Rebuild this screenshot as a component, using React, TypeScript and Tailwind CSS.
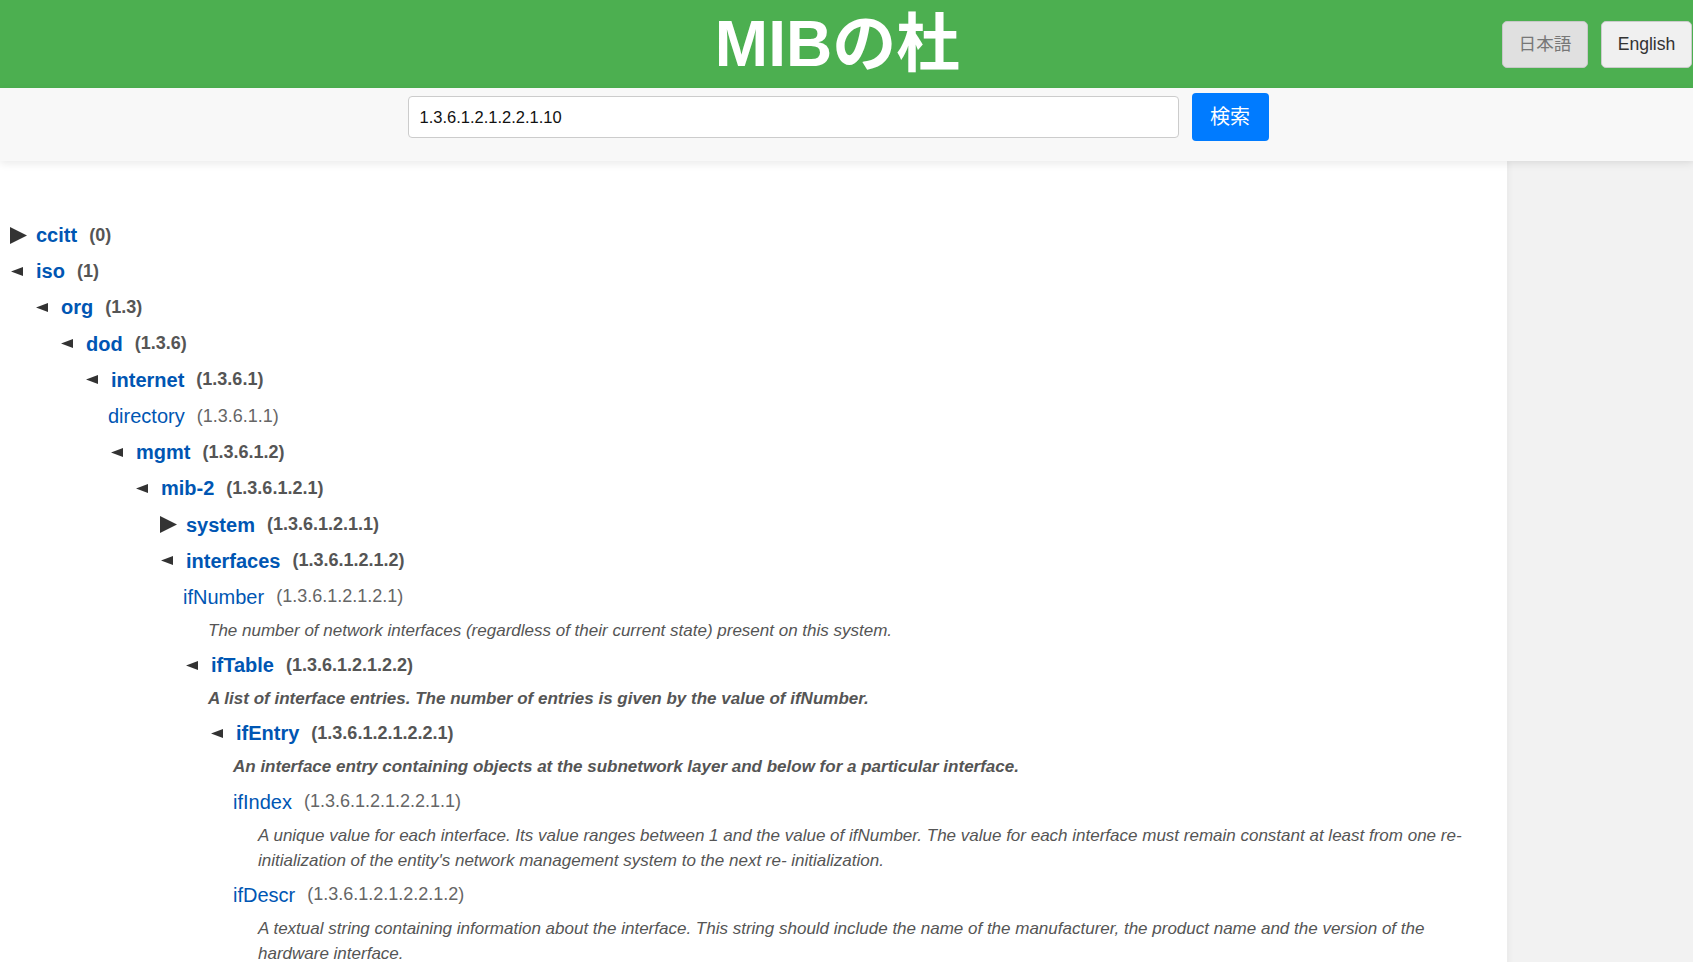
import { useState } from "react";

type MibNode = {
  name: string;
  oid: string;
  state?: "open" | "closed";
  desc?: string;
  descBold?: boolean;
  children?: MibNode[];
};

const tree: MibNode[] = [
  { name: "ccitt", oid: "0", state: "closed" },
  {
    name: "iso", oid: "1", state: "open",
    children: [{
      name: "org", oid: "1.3", state: "open",
      children: [{
        name: "dod", oid: "1.3.6", state: "open",
        children: [{
          name: "internet", oid: "1.3.6.1", state: "open",
          children: [
            { name: "directory", oid: "1.3.6.1.1" },
            {
              name: "mgmt", oid: "1.3.6.1.2", state: "open",
              children: [{
                name: "mib-2", oid: "1.3.6.1.2.1", state: "open",
                children: [
                  { name: "system", oid: "1.3.6.1.2.1.1", state: "closed" },
                  {
                    name: "interfaces", oid: "1.3.6.1.2.1.2", state: "open",
                    children: [
                      {
                        name: "ifNumber", oid: "1.3.6.1.2.1.2.1",
                        desc: "The number of network interfaces (regardless of their current state) present on this system.",
                      },
                      {
                        name: "ifTable", oid: "1.3.6.1.2.1.2.2", state: "open", descBold: true,
                        desc: "A list of interface entries. The number of entries is given by the value of ifNumber.",
                        children: [{
                          name: "ifEntry", oid: "1.3.6.1.2.1.2.2.1", state: "open", descBold: true,
                          desc: "An interface entry containing objects at the subnetwork layer and below for a particular interface.",
                          children: [
                            {
                              name: "ifIndex", oid: "1.3.6.1.2.1.2.2.1.1",
                              desc: "A unique value for each interface. Its value ranges between 1 and the value of ifNumber. The value for each interface must remain constant at least from one re- initialization of the entity's network management system to the next re- initialization.",
                            },
                            {
                              name: "ifDescr", oid: "1.3.6.1.2.1.2.2.1.2",
                              desc: "A textual string containing information about the interface. This string should include the name of the manufacturer, the product name and the version of the hardware interface.",
                            },
                          ],
                        }],
                      },
                    ],
                  },
                ],
              }],
            },
          ],
        }],
      }],
    }],
  },
];

function Toggle({ state }: { state: "open" | "closed" }) {
  return (
    <span className="w-[28px] shrink-0 flex items-center">
      {state === "closed" ? (
        <svg width="17" height="17" viewBox="0 0 17 17" className="ml-[2px]">
          <polygon points="0,0 17,8.5 0,17" fill="#333" />
        </svg>
      ) : (
        <svg width="12" height="9" viewBox="0 0 12 9" className="ml-[3px]">
          <polygon points="12,0 0,4.5 12,9" fill="#333" />
        </svg>
      )}
    </span>
  );
}

function TreeNode({ node }: { node: MibNode }) {
  const branch = !!node.state;
  return (
    <div>
      <div className="flex items-center h-[36.2px] whitespace-nowrap">
        {node.state && <Toggle state={node.state} />}
        <a href="#" className={`text-[20px] text-[#0056b3] ${branch ? "font-bold" : ""}`}>
          {node.name}
        </a>
        <span className={`ml-[12px] text-[18px] ${branch ? "font-bold text-[#555]" : "text-[#666]"}`}>
          ({node.oid})
        </span>
      </div>
      {node.desc && (
        <p className={`pl-[25px] mt-[3px] mb-[4px] text-[17px] leading-[25px] italic text-[#555] ${node.descBold ? "font-bold" : ""}`}>
          {node.desc}
        </p>
      )}
      {node.children && node.state === "open" && (
        <div className="pl-[25px]">
          {node.children.map(c => <TreeNode key={c.oid} node={c} />)}
        </div>
      )}
    </div>
  );
}

export default function App() {
  const [query, setQuery] = useState("1.3.6.1.2.1.2.2.1.10");

  return (
    <div className="min-h-screen flex flex-col bg-white font-['Liberation_Sans','Noto_Sans_CJK_JP',sans-serif]">
      {/* header */}
      <header className="h-[88px] bg-[#4caf50] grid grid-cols-[1fr_auto_1fr] items-center">
        <div />
        <h1 className="mr-[18px] text-[64px] leading-none font-bold text-white">MIBの杜</h1>
        <div className="flex justify-end gap-[13px] pr-[1px]">
          <button disabled className="w-[86px] h-[47px] rounded-[5px] border border-[#c8c8c8] bg-[#e0e0e0] text-[17.6px] text-[#777]">
            日本語
          </button>
          <button className="w-[91px] h-[47px] rounded-[5px] border border-[#ccc] bg-[#f0f0f0] text-[17.6px] text-[#333]">
            English
          </button>
        </div>
      </header>

      {/* search */}
      <div className="relative z-10 h-[73px] bg-[#f8f8f8] shadow-[0_3px_8px_rgba(0,0,0,0.08)] flex items-center justify-center gap-[13px] pt-[5px] pb-[20px] pr-[17px]">
        <input
          value={query}
          onChange={e => setQuery(e.target.value)}
          className="w-[771px] h-[42px] rounded-[4px] border border-[#ccc] bg-white px-[11px] text-[16.5px] text-[#111] outline-none"
        />
        <button className="w-[77px] h-[48px] rounded-[4px] bg-[#007bff] text-[20px] text-white">検索</button>
      </div>

      {/* body */}
      <div className="flex flex-1">
        <main className="flex-1 pt-[56px] pl-[8px] pr-[30px] pb-10">
          {tree.map(n => <TreeNode key={n.oid} node={n} />)}
        </main>
        <aside className="w-[186px] shrink-0 bg-[#f2f2f2] shadow-[inset_3px_0_4px_rgba(0,0,0,0.03)]" />
      </div>
    </div>
  );
}
